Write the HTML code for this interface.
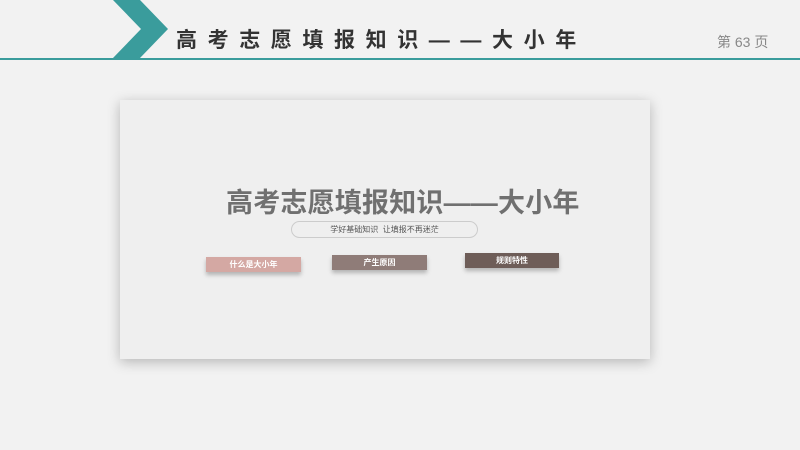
<!DOCTYPE html>
<html><head><meta charset="utf-8"><style>
*{margin:0;padding:0;box-sizing:border-box}
body{width:800px;height:450px;background:#f2f2f2;position:relative;overflow:hidden;font-family:"Liberation Sans","Noto Sans CJK SC",sans-serif}
.line{position:absolute;left:0;top:58px;width:800px;height:2px;background:#3a9c9c}
.title{position:absolute;left:176px;top:24px;font-size:21px;font-weight:bold;color:#333;letter-spacing:10.6px;white-space:nowrap}
.pg{position:absolute;left:717px;top:32px;font-size:14px;color:#888}
.card{position:absolute;left:120px;top:100px;width:530px;height:259px;background:#efefef;box-shadow:0 3px 12px rgba(0,0,0,.25)}
.big{position:absolute;left:226px;top:181px;font-size:27px;font-weight:bold;color:#707070;white-space:nowrap;letter-spacing:0.2px}
.pill{position:absolute;left:291px;top:221px;width:187px;height:17px;border:1px solid #ccc;border-radius:9px;font-size:8px;color:#555;text-align:center;line-height:15px}
.b{position:absolute;height:15px;color:#fff;font-size:8px;font-weight:bold;text-align:center;line-height:15px;box-shadow:0 3px 4px rgba(0,0,0,.25)}
</style></head><body>
<svg style="position:absolute;left:0;top:0" width="800" height="60"><polygon points="113,0 140,0 168,29 140,58 113,58 141,29" fill="#3a9c9c"/></svg>
<div class="line"></div>
<div class="title">高考志愿填报知识——大小年</div>
<div class="pg">第 63 页</div>
<div class="card"></div>
<div class="big">高考志愿填报知识——大小年</div>
<div class="pill">学好基础知识&nbsp;&nbsp;让填报不再迷茫</div>
<div class="b" style="left:206px;top:257px;width:95px;background:#d4a8a3">什么是大小年</div>
<div class="b" style="left:332px;top:255px;width:95px;background:#8f7c78">产生原因</div>
<div class="b" style="left:465px;top:253px;width:94px;background:#6e5d58">规则特性</div>
</body></html>
